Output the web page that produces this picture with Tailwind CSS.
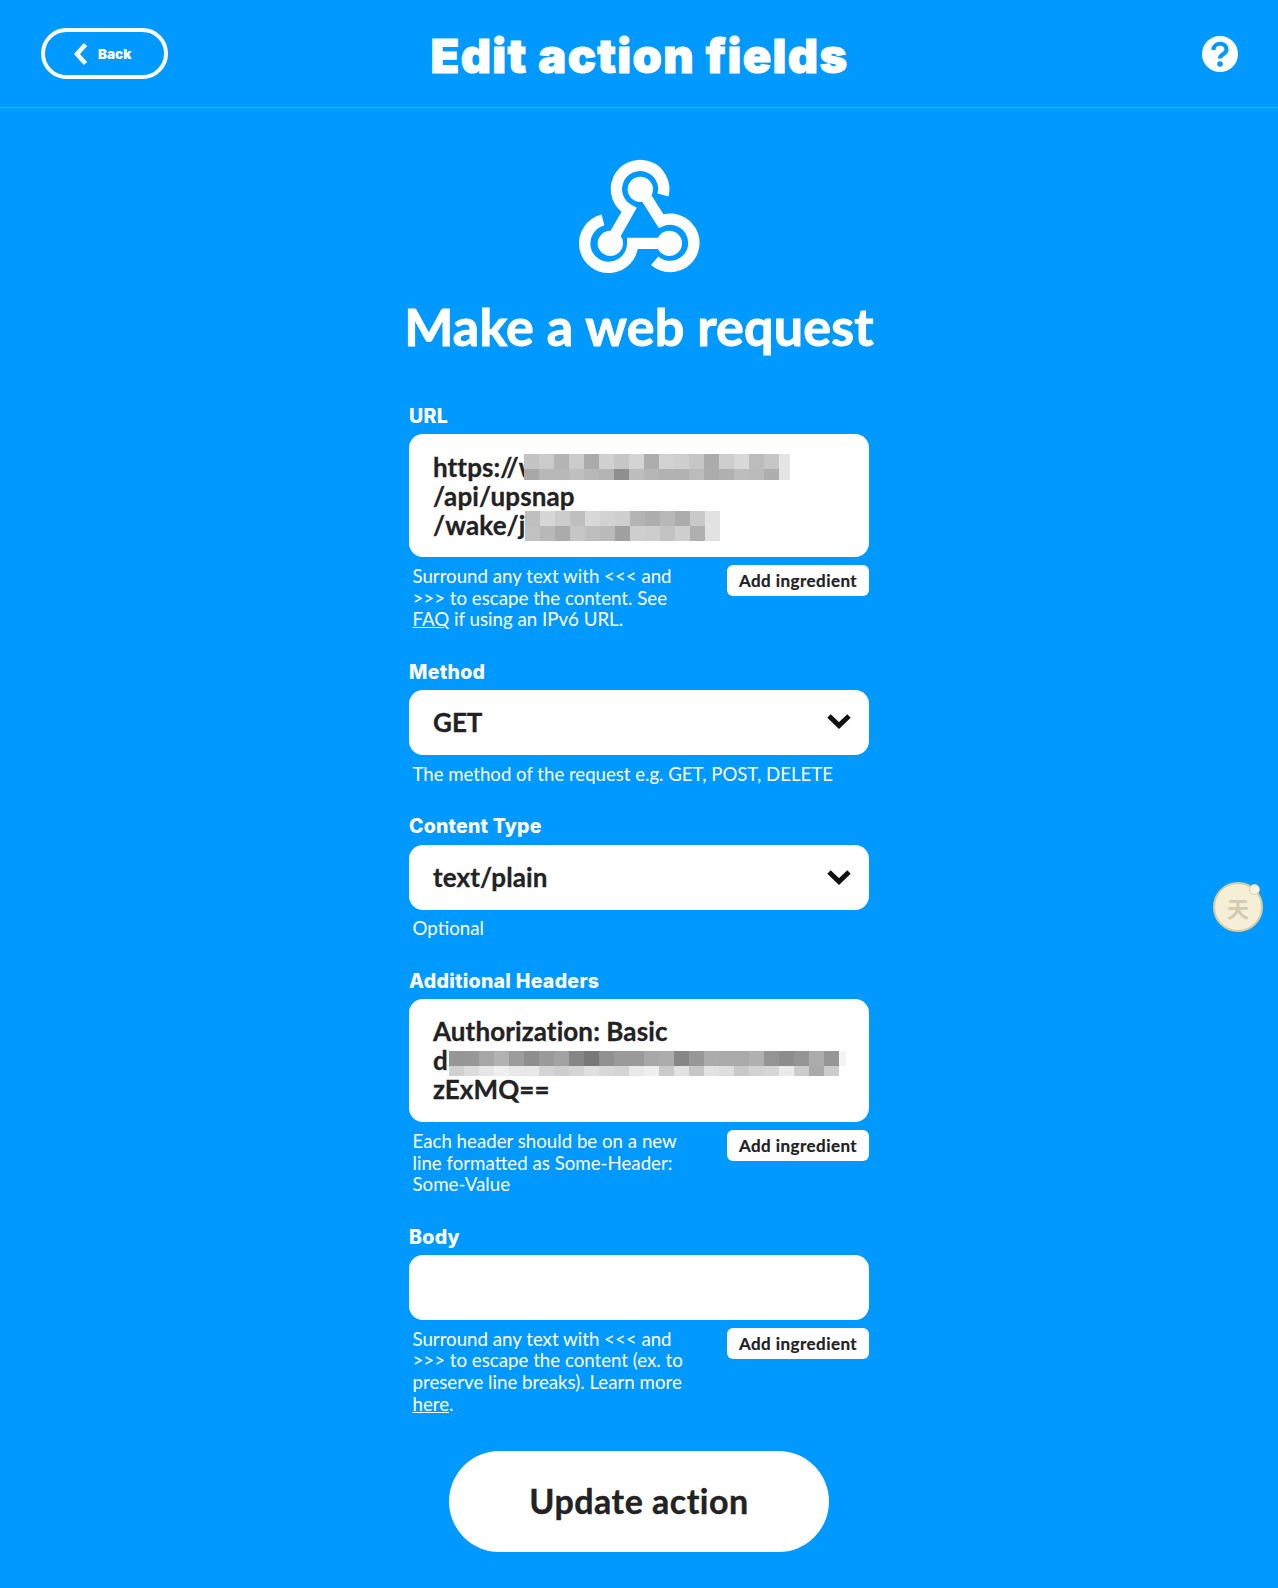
<!doctype html>
<html lang="en"><head><meta charset="utf-8"><title>Edit action fields</title>
<script src="https://cdn.jsdelivr.net/npm/@tailwindcss/browser@4"></script></head>
<body class="bg-[#0099ff] font-['Lato','Liberation_Sans',sans-serif] text-white">
<div class="relative w-[1278px] h-[1588px] overflow-hidden">
<header class="relative flex items-center justify-center h-[108px] border-b border-white/20">
  <a class="absolute left-[41px] top-[28px] flex items-center w-[127px] h-[51px] rounded-[26px] border-4 border-white pl-[28px] pt-[1px] font-['Inter',sans-serif] text-[13.5px] font-black">
    <svg class="w-[16px] h-[24px] mr-[9px]" viewBox="0 0 16 24"><path d="M12.500 2.500 L4 12 L12.500 21.500" fill="none" stroke="#fff" stroke-width="4.500"/></svg>Back</a>
  <h1 class="font-['Inter',sans-serif] text-[47px] leading-[60px] font-black tracking-[1.3px] mt-[4px] ml-[1px] [-webkit-text-stroke:1px_white]">Edit action fields</h1>
  <svg class="absolute left-[1202px] top-[36px] w-[36px] h-[36px]" viewBox="0 0 36 36"><circle cx="18" cy="18" r="18" fill="#fff"/><path d="M11.500 14 C11.500 5.500 24.500 6 24.500 13.500 C24.500 18.500 18 18 18 22.500" fill="none" stroke="#0099ff" stroke-width="4.200"/><circle cx="18" cy="28" r="2.800" fill="#0099ff"/></svg>
</header>
<main class="flex flex-col items-center">
  <svg class="mt-[32px] ml-[3px] w-[160px] h-[150px]" viewBox="0 0 480 450"><g fill="none" stroke="#fff" stroke-width="34"><path d="M306 165 A71 71 0 1 0 204 210 L150 305"/><path d="M126 240 A72 72 0 1 0 215 310 L325 310"/><path d="M281 362 A71 71 0 1 0 300 243 L240 148"/></g><g fill="#fff"><circle cx="238" cy="148" r="38"/><circle cx="148" cy="310" r="38"/><circle cx="325" cy="310" r="38"/></g></svg>
  <h2 class="mt-[6px] mb-[47px] text-[52px] leading-[60px] font-bold tracking-[0.2px] [-webkit-text-stroke:1px_white]">Make a web request</h2>
  <div class="w-[460px]">
    <section class="mb-[28px]">
      <label class="block h-[24px] mb-[7px] pt-[1px] font-['Inter',sans-serif] text-[19.5px] leading-[24px] font-extrabold tracking-[0.3px]">URL</label>
      <div class="relative h-[123px] rounded-[14px] bg-white px-[24px] py-[18.5px] text-[26px] leading-[29px] font-bold tracking-[0.1px] [-webkit-text-stroke:0.3px_#222222] text-[#222222]">https://w<br>/api/upsnap<br>/wake/ji
        <svg class="absolute left-[115px] top-[20px] w-[266px] h-[26px]" viewBox="0 0 266 26" shape-rendering="crispEdges"><rect x="0" width="15" height="15" fill="#c4c4c4"/><rect x="15" width="15" height="15" fill="#cbcbcb"/><rect x="30" width="15" height="15" fill="#b4b4b4"/><rect x="45" width="15" height="15" fill="#cccccc"/><rect x="60" width="15" height="15" fill="#aaaaaa"/><rect x="75" width="15" height="15" fill="#d0d0d0"/><rect x="90" width="15" height="15" fill="#c6c6c6"/><rect x="105" width="15" height="15" fill="#d4d4d4"/><rect x="120" width="15" height="15" fill="#adadad"/><rect x="135" width="15" height="15" fill="#d2d2d2"/><rect x="150" width="15" height="15" fill="#cfcfcf"/><rect x="165" width="15" height="15" fill="#c6c6c6"/><rect x="180" width="15" height="15" fill="#ababab"/><rect x="195" width="15" height="15" fill="#cecece"/><rect x="210" width="15" height="15" fill="#d8d8d8"/><rect x="225" width="15" height="15" fill="#bcbcbc"/><rect x="240" width="15" height="15" fill="#c6c6c6"/><rect x="255" width="11" height="15" fill="#e4e4e4"/>
        <rect x="0" y="15" width="15" height="11" fill="#a8a8a8"/><rect x="15" y="15" width="15" height="11" fill="#b8b8b8"/><rect x="30" y="15" width="15" height="11" fill="#b8b8b8"/><rect x="45" y="15" width="15" height="11" fill="#bfbfbf"/><rect x="60" y="15" width="15" height="11" fill="#b8b8b8"/><rect x="75" y="15" width="15" height="11" fill="#b4b4b4"/><rect x="90" y="15" width="15" height="11" fill="#8f8f8f"/><rect x="105" y="15" width="15" height="11" fill="#bdbdbd"/><rect x="120" y="15" width="15" height="11" fill="#b6b6b6"/><rect x="135" y="15" width="15" height="11" fill="#b2b2b2"/><rect x="150" y="15" width="15" height="11" fill="#b2b2b2"/><rect x="165" y="15" width="15" height="11" fill="#bcbcbc"/><rect x="180" y="15" width="15" height="11" fill="#acacac"/><rect x="195" y="15" width="15" height="11" fill="#b0b0b0"/><rect x="210" y="15" width="15" height="11" fill="#bdbdbd"/><rect x="225" y="15" width="15" height="11" fill="#bbbbbb"/><rect x="240" y="15" width="15" height="11" fill="#aeaeae"/><rect x="255" y="15" width="11" height="11" fill="#e4e4e4"/></svg>
        <svg class="absolute left-[116px] top-[77px] w-[195px] h-[30px]" viewBox="0 0 195 30" shape-rendering="crispEdges"><rect x="0" width="15" height="15" fill="#bfbfbf"/><rect x="15" width="15" height="15" fill="#d6d6d6"/><rect x="30" width="15" height="15" fill="#cccccc"/><rect x="45" width="15" height="15" fill="#bfbfbf"/><rect x="60" width="15" height="15" fill="#d8d8d8"/><rect x="75" width="15" height="15" fill="#d2d2d2"/><rect x="90" width="15" height="15" fill="#cfcfcf"/><rect x="105" width="15" height="15" fill="#b4b4b4"/><rect x="120" width="15" height="15" fill="#aeaeae"/><rect x="135" width="15" height="15" fill="#b8b8b8"/><rect x="150" width="15" height="15" fill="#acacac"/><rect x="165" width="15" height="15" fill="#c9c9c9"/><rect x="180" width="15" height="15" fill="#e2e2e2"/>
        <rect x="0" y="15" width="15" height="15" fill="#c2c2c2"/><rect x="15" y="15" width="15" height="15" fill="#b9b9b9"/><rect x="30" y="15" width="15" height="15" fill="#ababab"/><rect x="45" y="15" width="15" height="15" fill="#c6c6c6"/><rect x="60" y="15" width="15" height="15" fill="#bebebe"/><rect x="75" y="15" width="15" height="15" fill="#bababa"/><rect x="90" y="15" width="15" height="15" fill="#a0a0a0"/><rect x="105" y="15" width="15" height="15" fill="#cfcfcf"/><rect x="120" y="15" width="15" height="15" fill="#cdcdcd"/><rect x="135" y="15" width="15" height="15" fill="#c3c3c3"/><rect x="150" y="15" width="15" height="15" fill="#cfcfcf"/><rect x="165" y="15" width="15" height="15" fill="#b0b0b0"/><rect x="180" y="15" width="15" height="15" fill="#e2e2e2"/></svg>
      </div>
      <div class="flex justify-between items-start">
        <p class="mt-[9px] pl-[3.5px] text-[18.7px] leading-[21.6px]">Surround any text with &lt;&lt;&lt; and<br>&gt;&gt;&gt; to escape the content. See<br><a class="underline">FAQ</a> if using an IPv6 URL.</p>
        <button class="mt-[8px] w-[142px] h-[31px] rounded-[6px] bg-white text-[17px] font-bold tracking-[0.45px] [-webkit-text-stroke:0.2px_#222222] text-[#222222]">Add ingredient</button>
      </div>
    </section>
    <section class="mb-[28px]">
      <label class="block h-[24px] mb-[7px] pt-[1px] font-['Inter',sans-serif] text-[19.5px] leading-[24px] font-extrabold tracking-[0.3px]">Method</label>
      <div class="flex items-center justify-between h-[65px] rounded-[14px] bg-white pl-[24px] pr-[18px] text-[26px] font-bold [-webkit-text-stroke:0.3px_#222222] text-[#222222]">GET
        <svg class="w-[24px] h-[16px] mb-[2px]" viewBox="0 0 24 16"><path d="M2 3 L12 12.500 L22 3" fill="none" stroke="#111" stroke-width="5"/></svg></div>
      <p class="mt-[9.5px] mb-[-0.5px] pl-[3.5px] text-[18.6px] leading-[21.6px]">The method of the request e.g. GET, POST, DELETE</p>
    </section>
    <section class="mb-[28px]">
      <label class="block h-[24px] mb-[8px] pt-[1px] font-['Inter',sans-serif] text-[19.5px] leading-[24px] font-extrabold tracking-[0.2px]">Content Type</label>
      <div class="flex items-center justify-between h-[65px] rounded-[14px] bg-white pl-[24px] pr-[18px] text-[26px] font-bold tracking-[0.1px] [-webkit-text-stroke:0.3px_#222222] text-[#222222]">text/plain
        <svg class="w-[24px] h-[16px] mb-[2px]" viewBox="0 0 24 16"><path d="M2 3 L12 12.500 L22 3" fill="none" stroke="#111" stroke-width="5"/></svg></div>
      <p class="mt-[8px] pl-[3.5px] text-[18.7px] leading-[21.6px]">Optional</p>
    </section>
    <section class="mb-[28px]">
      <label class="block h-[24px] mb-[7px] pt-[1px] font-['Inter',sans-serif] text-[19.5px] leading-[24px] font-extrabold tracking-[0.3px]">Additional Headers</label>
      <div class="relative h-[123px] rounded-[14px] bg-white px-[24px] py-[18.5px] text-[26px] leading-[29px] font-bold tracking-[0.1px] [-webkit-text-stroke:0.3px_#222222] text-[#222222]">Authorization: Basic<br>d<br>zExMQ==
        <svg class="absolute left-[40px] top-[52px] w-[397px] h-[25px]" viewBox="0 0 397 25" shape-rendering="crispEdges"><rect x="0" width="15" height="15" fill="#969696"/><rect x="15" width="15" height="15" fill="#989898"/><rect x="30" width="15" height="15" fill="#a6a6a6"/><rect x="45" width="15" height="15" fill="#b2b2b2"/><rect x="60" width="15" height="15" fill="#9c9c9c"/><rect x="75" width="15" height="15" fill="#8e8e8e"/><rect x="90" width="15" height="15" fill="#9a9a9a"/><rect x="105" width="15" height="15" fill="#a2a2a2"/><rect x="120" width="15" height="15" fill="#868686"/><rect x="135" width="15" height="15" fill="#787878"/><rect x="150" width="15" height="15" fill="#909090"/><rect x="165" width="15" height="15" fill="#9a9a9a"/><rect x="180" width="15" height="15" fill="#9a9a9a"/><rect x="195" width="15" height="15" fill="#a8a8a8"/><rect x="210" width="15" height="15" fill="#acacac"/><rect x="225" width="15" height="15" fill="#868686"/><rect x="240" width="15" height="15" fill="#989898"/><rect x="255" width="15" height="15" fill="#acacac"/><rect x="270" width="15" height="15" fill="#aaaaaa"/><rect x="285" width="15" height="15" fill="#aaaaaa"/><rect x="300" width="15" height="15" fill="#b0b0b0"/><rect x="315" width="15" height="15" fill="#949494"/><rect x="330" width="15" height="15" fill="#8c8c8c"/><rect x="345" width="15" height="15" fill="#949494"/><rect x="360" width="15" height="15" fill="#acacac"/><rect x="375" width="15" height="15" fill="#969696"/><rect x="390" width="7" height="15" fill="#f4f4f4"/>
        <rect x="0" y="15" width="15" height="10" fill="#d0d0d0"/><rect x="15" y="15" width="15" height="10" fill="#dcdcdc"/><rect x="30" y="15" width="15" height="10" fill="#e6e6e6"/><rect x="45" y="15" width="15" height="10" fill="#eeeeee"/><rect x="60" y="15" width="15" height="10" fill="#e8e8e8"/><rect x="75" y="15" width="15" height="10" fill="#e8e8e8"/><rect x="90" y="15" width="15" height="10" fill="#d4d4d4"/><rect x="105" y="15" width="15" height="10" fill="#cecece"/><rect x="120" y="15" width="15" height="10" fill="#d4d4d4"/><rect x="135" y="15" width="15" height="10" fill="#e0e0e0"/><rect x="150" y="15" width="15" height="10" fill="#d8d8d8"/><rect x="165" y="15" width="15" height="10" fill="#d4d4d4"/><rect x="180" y="15" width="15" height="10" fill="#e8e8e8"/><rect x="195" y="15" width="15" height="10" fill="#eeeeee"/><rect x="210" y="15" width="15" height="10" fill="#cacaca"/><rect x="225" y="15" width="15" height="10" fill="#e2e2e2"/><rect x="240" y="15" width="15" height="10" fill="#c6c6c6"/><rect x="255" y="15" width="15" height="10" fill="#e2e2e2"/><rect x="270" y="15" width="15" height="10" fill="#dedede"/><rect x="285" y="15" width="15" height="10" fill="#c8c8c8"/><rect x="300" y="15" width="15" height="10" fill="#d2d2d2"/><rect x="315" y="15" width="15" height="10" fill="#d6d6d6"/><rect x="330" y="15" width="15" height="10" fill="#eaeaea"/><rect x="345" y="15" width="15" height="10" fill="#cccccc"/><rect x="360" y="15" width="15" height="10" fill="#aaaaaa"/><rect x="375" y="15" width="15" height="10" fill="#cccccc"/></svg>
      </div>
      <div class="flex justify-between items-start">
        <p class="mt-[9px] pl-[3.5px] text-[18.7px] leading-[21.6px]">Each header should be on a new<br>line formatted as Some-Header:<br>Some-Value</p>
        <button class="mt-[8px] w-[142px] h-[31px] rounded-[6px] bg-white text-[17px] font-bold tracking-[0.45px] [-webkit-text-stroke:0.2px_#222222] text-[#222222]">Add ingredient</button>
      </div>
    </section>
    <section class="mb-[36px]">
      <label class="block h-[24px] mb-[7px] pt-[1px] font-['Inter',sans-serif] text-[19.5px] leading-[24px] font-extrabold tracking-[0.3px]">Body</label>
      <div class="h-[65px] rounded-[14px] bg-white"></div>
      <div class="flex justify-between items-start">
        <p class="mt-[9px] pl-[3.5px] text-[18.7px] leading-[21.6px]">Surround any text with &lt;&lt;&lt; and<br>&gt;&gt;&gt; to escape the content (ex. to<br>preserve line breaks). Learn more<br><a class="underline">here</a>.</p>
        <button class="mt-[8px] w-[142px] h-[31px] rounded-[6px] bg-white text-[17px] font-bold tracking-[0.45px] [-webkit-text-stroke:0.2px_#222222] text-[#222222]">Add ingredient</button>
      </div>
    </section>
    <button class="block mx-auto w-[380px] h-[101px] pb-[2px] rounded-[50.5px] bg-white text-[34px] font-bold tracking-[0.5px] [-webkit-text-stroke:0.4px_#222222] text-[#222222]">Update action</button>
  </div>
</main>
<div class="absolute left-[1213px] top-[882px] flex items-center justify-center w-[50px] h-[50px] rounded-full border-2 border-[#d8cca0] bg-[#f5efd8] font-['Noto_Sans_CJK_SC',sans-serif] text-[22px] font-bold text-[#d2cbb0]">天
  <span class="absolute right-[1px] top-[0px] w-[11px] h-[11px] rounded-full border border-[#d8cca0] bg-[#f8f4e4]"></span></div>
</div>
</body></html>
